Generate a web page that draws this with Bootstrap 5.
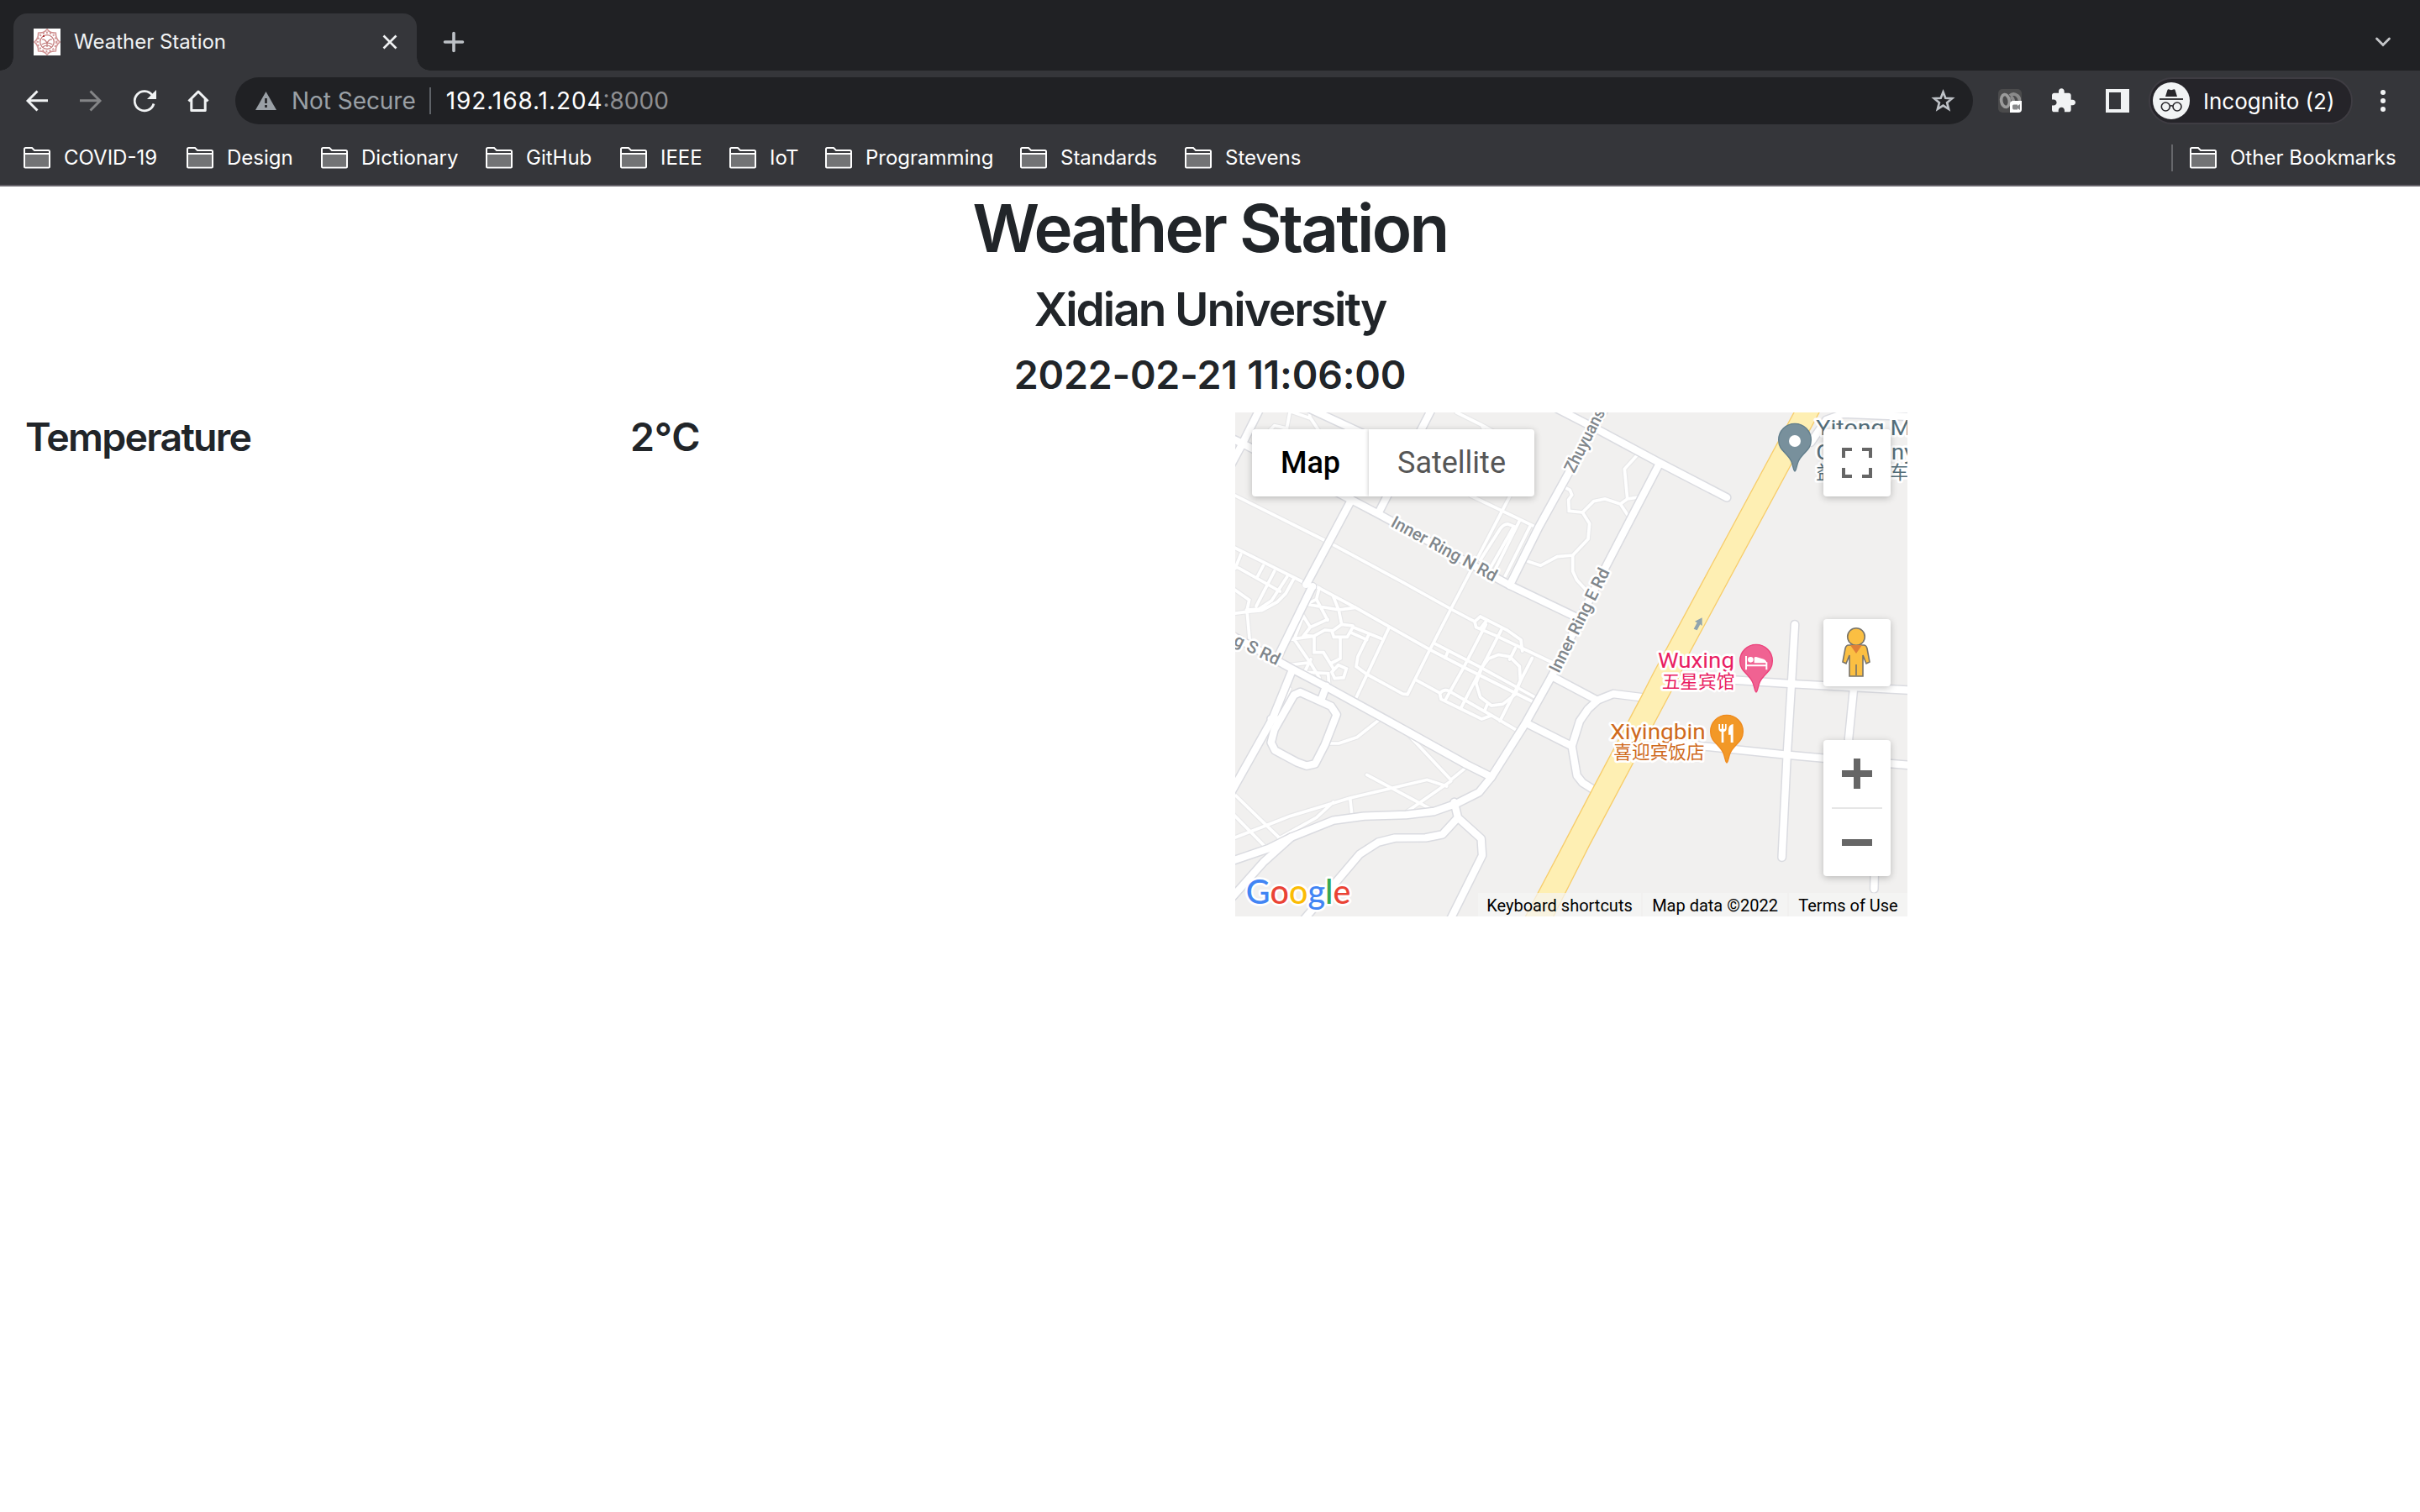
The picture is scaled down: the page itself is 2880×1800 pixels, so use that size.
<!DOCTYPE html>
<html lang="en">
<head>
<meta charset="utf-8">
<title>Weather Station</title>
<link href="https://cdn.jsdelivr.net/npm/bootstrap@5.3.0/dist/css/bootstrap.min.css" rel="stylesheet">
<style>
  body { font-family: Inter, "Noto Sans CJK SC", sans-serif; color: #212529; background: #fff; width: 2880px; height: 1800px; overflow: hidden; }
  svg { display: block; overflow: visible; flex: none; }
  .tabstrip { height: 84px; background: #202124; padding: 16px 35px 0 16px; }
  .tab-active { position: relative; width: 480px; height: 68px; background: #35363a; border-radius: 16px 16px 0 0; padding: 0 23px 0 24px; color: #f1f3f4; font-size: 24px; }
  .tab-active::before, .tab-active::after { content: ""; position: absolute; bottom: 0; width: 16px; height: 16px; }
  .tab-active::before { left: -16px; background: radial-gradient(circle at 0 0, transparent 15.5px, #35363a 16px); }
  .tab-active::after { right: -16px; background: radial-gradient(circle at 100% 0, transparent 15.5px, #35363a 16px); }
  .tab-title { margin-left: 16px; }
  .plus-btn { margin-left: 32px; }
  .toolbar-row { height: 72px; background: #35363a; padding-left: 31px; padding-right: 41px; }
  .nav-icons { gap: 38px; width: 249px; }
  .home-ico { margin-left: -1px; }
  .omnibox { width: 2068px; height: 56px; border-radius: 28px; background: #202124; padding: 0 21px 0 24px; font-size: 28px; white-space: nowrap; }
  .t-mute { color: #9aa0a6; margin-left: 18px; letter-spacing: -.05px; }
  .t-host { letter-spacing: .92px; }
  .t-port { color: #8e8f92; }
  .omni-div { width: 2px; height: 32px; background: #5f6368; margin: 0 18px 0 16px; }
  .ext-icons { gap: 36px; margin-left: 30px; }
  .incog { width: 243px; height: 56px; margin-left: 23px; border: 2px solid #3f3d43; border-radius: 28px; background: #252429; color: #fff; font-size: 26px; padding-left: 3px; white-space: nowrap; }
  .incog-name { margin-left: 16px; }
  .bookbar { height: 66px; background: #35363a; border-bottom: 2px solid #66636a; padding: 0 30px 1px 28px; color: #fff; font-size: 24px; white-space: nowrap; }
  .bm { gap: 16px; }
  .bm span { padding-top: 1px; }
  .w-covid { width: 194px; } .w-design { width: 160px; } .w-dict { width: 196px; } .w-git { width: 160px; } .w-ieee { width: 130px; }
  .w-iot { width: 114px; } .w-prog { width: 232px; } .w-std { width: 196px; } .w-other { width: 244px; }
  .bm-div { width: 2px; height: 32px; background: #66676b; margin-right: 20px; }
  .page-head { text-align: center; }
  .ttl { font-weight: 560; margin: 0 0 16px; white-space: nowrap; }
  .t1 { font-size: 78px; height: 96px; line-height: 100px; letter-spacing: -2.75px; }
  .t2 { font-size: 55px; height: 67.2px; line-height: 69px; letter-spacing: -2.05px; }
  .t3 { font-size: 46.5px; height: 57.6px; line-height: 59px; letter-spacing: -.2px; }
  .t3-name { letter-spacing: -1.75px; }
  .board > div { padding: 0 30px; }
  .map-box { position: relative; width: 800px; height: 600px; background: #f1f0ef; overflow: hidden; font-family: Roboto, "Noto Sans CJK SC", sans-serif; }
  .map-ui { position: absolute; inset: 0; padding: 20px 20px 0; }
  .map-card { background: #fff; border-radius: 4px; box-shadow: 0 2px 8px rgba(0,0,0,.24); }
  .type-map, .type-sat { height: 80px; font-size: 36px; display: flex; align-items: center; justify-content: center; }
  .type-map { width: 139px; color: #000; font-weight: 500; }
  .type-sat { width: 197px; color: #565656; box-shadow: -1px 0 4px rgba(0,0,0,.18); clip-path: inset(0 0 0 -5px); }
  .sq { width: 80px; height: 80px; }
  .pegman { margin-top: 146px; }
  .zoombox { width: 80px; height: 162px; margin-top: 64px; padding-top: 22px; }
  .zoom-line { width: 60px; height: 2px; background: #e6e6e6; margin: 22px 0 36px; }
  .legal { position: absolute; right: 0; bottom: 0; height: 28px; font-size: 20px; line-height: 30px; color: #000; gap: 2px; white-space: nowrap; }
  .legal div { background: rgba(245,245,245,.7); text-align: center; }
  .l1 { width: 194px; } .l2 { width: 172px; } .l3 { width: 141px; }
  .lbl { paint-order: stroke; stroke: #fff; stroke-width: 16; stroke-linejoin: round; }
</style>
<script src="https://cdn.jsdelivr.net/npm/bootstrap@5.3.0/dist/js/bootstrap.bundle.min.js"></script>
</head>
<body>
<svg width="0" height="0" class="position-absolute">
  <defs>
    <symbol id="folder" viewBox="0 0 32 26">
      <rect x="2" y="8" width="28" height="15" fill="#727375"/>
      <path d="M1 23.5V2.5Q1 1 2.500 1H10L13 4H29.500Q31 4 31 5.500V23.500Q31 24.500 30 24.500H2Q1 24.500 1 23.500Z M1 8H31" fill="none" stroke="#fff" stroke-width="2"/>
    </symbol>
    <path id="pin" d="M2028 243C2023 243 2022 222 2015 207C2000 175 1970 170 1970 131A58 58 0 0 1 2086 131C2086 170 2056 175 2041 207C2034 222 2033 243 2028 243Z"/>
  </defs>
</svg>

<header>
  <div class="tabstrip d-flex align-items-center">
    <div class="tab-active d-flex align-items-center">
      <svg width="32" height="32" viewBox="0 0 32 32">
        <rect width="32" height="32" fill="#fff"/>
        <g fill="none" stroke="#cf8f8f">
          <path d="M16 .8L20 4.500L26.500 5L27 11.500L31.200 16L27 20.500L26.500 27L20 27.500L16 31.200L12 27.500L5.500 27L5 20.500L.8 16L5 11.500L5.500 5L12 4.500Z" stroke-width="1.300"/>
          <circle cx="16" cy="16" r="13" stroke-width=".7"/>
          <circle cx="16" cy="16" r="11" stroke-dasharray="2 2.200" stroke-width="1.800"/>
          <circle cx="16" cy="16" r="8.300" stroke="#bf7070" stroke-width="1.200"/>
          <path d="M10 13Q13 12 16 17Q19 12 22 13M9.500 19Q16 15 22.500 19M11 22Q16 18 21 22M16 17V22" stroke="#c07878" stroke-width="1.200"/>
        </g>
        <rect x="11" y="8" width="2" height="2" fill="#b03030"/>
      </svg>
      <span class="tab-title">Weather Station</span>
      <svg class="ms-auto" width="18" height="18" viewBox="0 0 18 18"><path d="M1.500 1.500L16.500 16.500M16.500 1.500L1.500 16.500" stroke="#f1f3f4" stroke-width="2.600"/></svg>
    </div>
    <svg class="plus-btn" width="24" height="24" viewBox="0 0 24 24"><path d="M12 1.500V22.500M1.500 12H22.500" stroke="#bdc1c6" stroke-width="3.600" stroke-linecap="round"/></svg>
    <svg class="ms-auto" width="18" height="12" viewBox="0 0 18 12"><path d="M1.500 2L9 9.500L16.500 2" fill="none" stroke="#c5c7ca" stroke-width="2.800" stroke-linecap="round"/></svg>
  </div>

  <div class="toolbar-row d-flex align-items-center">
    <div class="nav-icons d-flex align-items-center flex-shrink-0">
      <svg width="26" height="26" viewBox="0 0 26 26"><path d="M13.500 1.500L2 13L13.500 24.500M2 12.800H26" fill="none" stroke="#f1f3f4" stroke-width="2.900"/></svg>
      <svg width="26" height="26" viewBox="0 0 26 26"><path d="M12.500 1.500L24 13L12.500 24.500M24 12.800H0" fill="none" stroke="#848587" stroke-width="2.900"/></svg>
      <svg width="27" height="26" viewBox="0 0 27 26"><path d="M22.300 6.500A11.600 11.600 0 1 0 24 16.500" fill="none" stroke="#f1f3f4" stroke-width="2.800"/><path d="M27 0V11H16Z" fill="#f1f3f4"/></svg>
      <svg class="home-ico" width="26" height="26" viewBox="0 0 26 26"><path d="M1.500 13.500L13 2L24.500 13.500M4.800 11V24.500H21.200V11" fill="none" stroke="#f1f3f4" stroke-width="3" stroke-linejoin="round"/></svg>
    </div>
    <div class="omnibox d-flex align-items-center flex-shrink-0">
      <svg width="25" height="22" viewBox="0 0 25 22"><path d="M12.500 0L25 22H0Z" fill="#9aa0a6"/><path d="M12.500 8V14M12.500 16V19" stroke="#202124" stroke-width="2.600"/></svg>
      <span class="t-mute">Not Secure</span>
      <div class="omni-div"></div>
      <span class="text-white t-host">192.168.1.204</span><span class="t-port">:8000</span>
      <svg class="ms-auto" width="29" height="28" viewBox="0 0 29 28"><path d="M14.500 3.500L17.300 10.700L25.200 11.200L19.100 16.200L21.100 23.900L14.500 19.600L7.900 23.900L9.900 16.200L3.800 11.200L11.700 10.700Z" fill="none" stroke="#bdc1c6" stroke-width="2.600"/></svg>
    </div>
    <div class="ext-icons d-flex align-items-center">
      <svg width="28" height="28" viewBox="0 0 28 28"><rect width="28" height="28" rx="5" fill="#4b4b4c"/><ellipse cx="8.500" cy="14" rx="4.800" ry="7.500" fill="none" stroke="#9b9b9b" stroke-width="3.600" transform="rotate(-10 8.500 14)"/><path d="M14 8Q18 4 23 8Q26 11 25 14M15 9Q18 11 18 15" fill="none" stroke="#8a8a8a" stroke-width="4"/><path d="M18 14H28V24Q28 28 24 28H14V18Q14 14 18 14Z" fill="#fff"/><path d="M18.500 18.500H23V20L26 18V25L23 23V24.500H18.500Q17 24.500 17 22V20Q17 18.500 18.500 18.500Z" fill="#88898b"/></svg>
      <svg width="28" height="28" viewBox="2 1.500 21 21"><path fill="#f1f3f4" d="M20.500 11H19V7c0-1.100-.9-2-2-2h-4V3.500C13 2.120 11.880 1 10.500 1S8 2.120 8 3.500V5H4c-1.100 0-1.990.9-1.990 2v3.800H3.500c1.490 0 2.700 1.210 2.700 2.700s-1.210 2.700-2.700 2.700H2V20c0 1.100.9 2 2 2h3.800v-1.500c0-1.490 1.210-2.700 2.700-2.700 1.490 0 2.700 1.210 2.700 2.700V22H17c1.100 0 2-.9 2-2v-4h1.500c1.380 0 2.500-1.120 2.500-2.500S21.880 11 20.500 11z"/></svg>
      <svg width="28" height="28" viewBox="0 0 28 28"><path fill-rule="evenodd" fill="#f1f3f4" d="M0 0H28V28H0ZM4 4V24H18V4Z"/></svg>
    </div>
    <div class="incog d-flex align-items-center flex-shrink-0">
      <svg width="44" height="44" viewBox="0 0 44 44"><circle cx="22" cy="22" r="22" fill="#f1f3f4"/><path d="M15 17L17.500 9Q18 8 19.500 8.500L22 9.300L24.500 8.500Q26 8 26.500 9L29 17Z" fill="#28272b"/><path d="M8 20H36" stroke="#28272b" stroke-width="1.800"/><g fill="none" stroke="#28272b" stroke-width="1.600"><circle cx="15.300" cy="29" r="5"/><circle cx="29" cy="29" r="5"/><path d="M20.300 28.300Q22 27.300 24 28.300"/></g></svg>
      <span class="incog-name">Incognito (2)</span>
    </div>
    <svg class="ms-auto" width="6" height="26" viewBox="0 0 6 26"><g fill="#f1f3f4"><circle cx="3" cy="3" r="3"/><circle cx="3" cy="13" r="3"/><circle cx="3" cy="23" r="3"/></g></svg>
  </div>

  <nav class="bookbar d-flex align-items-center">
    <div class="bm d-flex align-items-center w-covid"><svg width="32" height="26"><use href="#folder"/></svg><span>COVID-19</span></div>
    <div class="bm d-flex align-items-center w-design"><svg width="32" height="26"><use href="#folder"/></svg><span>Design</span></div>
    <div class="bm d-flex align-items-center w-dict"><svg width="32" height="26"><use href="#folder"/></svg><span>Dictionary</span></div>
    <div class="bm d-flex align-items-center w-git"><svg width="32" height="26"><use href="#folder"/></svg><span>GitHub</span></div>
    <div class="bm d-flex align-items-center w-ieee"><svg width="32" height="26"><use href="#folder"/></svg><span>IEEE</span></div>
    <div class="bm d-flex align-items-center w-iot"><svg width="32" height="26"><use href="#folder"/></svg><span>IoT</span></div>
    <div class="bm d-flex align-items-center w-prog"><svg width="32" height="26"><use href="#folder"/></svg><span>Programming</span></div>
    <div class="bm d-flex align-items-center w-std"><svg width="32" height="26"><use href="#folder"/></svg><span>Standards</span></div>
    <div class="bm d-flex align-items-center"><svg width="32" height="26"><use href="#folder"/></svg><span>Stevens</span></div>
    <div class="bm-div ms-auto"></div>
    <div class="bm d-flex align-items-center w-other"><svg width="32" height="26"><use href="#folder"/></svg><span>Other Bookmarks</span></div>
  </nav>
</header>

<main>
  <div class="page-head">
    <h1 class="ttl t1">Weather Station</h1>
    <h3 class="ttl t2">Xidian University</h3>
    <h4 class="ttl t3">2022-02-21 11:06:00</h4>
  </div>
  <div class="board row g-0">
    <div class="col-3"><h4 class="ttl t3 t3-name">Temperature</h4></div>
    <div class="col-3"><h4 class="ttl t3">2°C</h4></div>
    <div class="col-6">
      <div class="map-box">
        <svg width="800" height="600" viewBox="30 33 2400 1800">
          <defs>
            <g id="minor" fill="none">
              <path d="M20 325L360 495L620 635L800 735L885 780L890 800L960 830L1170 930"/>
              <path d="M885 780L905 762L1000 810L1050 845L1055 885M905 805L925 780"/>
              <path d="M20 512L285 645M320 655L460 730L725 880L850 945L1090 1065M745 860L900 940L1100 1050"/>
              <path d="M1010 333L800 735L715 900L645 1040L628 1038L500 968L462 940L468 905L505 830"/>
              <path d="M870 330L1115 448M820 33L910 78L960 105M910 78L920 100"/>
              <path d="M905 560L975 450Q990 430 1005 432L1025 440L940 590M1045 420L950 610M1085 435L990 625"/>
              <path d="M1075 565L1120 580L1180 548L1235 543L1290 485L1295 430L1270 390L1222 385L1220 345L1232 328L1225 310L1205 300"/>
              <path d="M1270 390L1310 350L1350 342L1405 360L1430 342L1475 335M1405 360L1435 405M1470 180L1420 235L1430 340M1235 543L1235 600L1250 632L1290 675"/>
              <path d="M50 540L30 590M20 580L45 590L190 672M130 580L108 622M170 600L105 725M20 660L80 703L72 740L82 850M240 625L210 680L180 710L125 740L70 745L20 752M215 620L160 705L115 735L70 738"/>
              <path d="M330 660L320 700L285 718L400 738L460 730M320 700L360 775M380 690L400 740L410 790M270 755L298 800L360 772M298 800L275 830L310 832L350 810L375 812L382 835L430 835L450 800L550 840M410 790L450 795M410 790L375 815M215 845L310 832M245 850L300 930L330 980M312 835L312 890L345 890L382 950M405 840L405 912L370 930M445 820L500 845M580 800L458 1060M270 765L240 845"/>
              <path d="M225 935L290 927M270 960L362 965L365 1010M300 915L280 955M375 960L398 935L427 948L417 980L385 983Z"/>
              <path d="M890 1000L905 1050L945 1080L985 1075L1030 1040L1048 990L1045 940L1010 905L970 898L935 912L910 945ZM930 1075L920 1100"/>
              <path d="M925 790L845 945L780 1060M980 810L905 955L835 1090M1030 875L1010 915M1090 910L975 1135M790 885L780 910"/>
              <path d="M675 988L760 1035L765 1057L910 1128L945 1115M762 1035Q775 1020 792 1027L945 1115L1035 1168"/>
              <path d="M545 1130L465 1193L400 1215L360 1215M225 1020L180 1110"/>
              <path d="M640 1175L800 1345L855 1300M800 1350L770 1370L645 1457M500 1327L735 1453M785 1368L715 1345L440 1410L225 1475L20 1555M440 1410L447 1475M380 1425L320 1480L185 1555M20 1390L185 1550M20 1465L140 1587"/>
              <path d="M225 33L215 85M230 30L300 55L330 100M295 33L297 50M150 100L170 80L215 90"/>
            </g>
            <g id="major" fill="none" stroke-linejoin="round">
              <path d="M118 20L58 140L10 230M10 122L58 145L445 345L540 395L1010 650L1260 770M300 22L490 110M732 20L545 385"/>
              <path d="M445 345L285 645M305 655L190 890L175 925"/>
              <path d="M10 825L235 950L350 1010L550 1120L640 1170L855 1290L945 1335M235 950L163 1127L10 1400"/>
              <path d="M1545 215L1350 590L1160 975L1065 1145L945 1335L900 1390L820 1430L740 1458L640 1470L490 1475L380 1490L230 1550L150 1590L10 1638"/>
              <path d="M1350 20L1220 250L1115 440L1010 650M1180 20L1320 92L1540 210L1785 337"/>
              <path d="M2085 140L2140 60L2200 38L2440 48"/>
              <path d="M240 1042L262 1032L372 1082L392 1112L350 1220L315 1288L285 1295L250 1282L172 1240L158 1212L170 1165ZM355 1010L335 1065M158 1128L185 1130"/>
              <path d="M230 1550L130 1640L10 1775M812 1425L825 1480L770 1540L710 1552L600 1553L540 1568L475 1610L390 1710L270 1850M825 1480L908 1555L912 1615L795 1850"/>
              <path d="M1160 975L1320 1060M1500 1053L1380 1038L1325 1060L1290 1092L1260 1135L1232 1225L1250 1330L1270 1355L1320 1387M1070 1143L1232 1225"/>
              <path d="M1560 975L1830 990L2030 1003L2440 1025M1560 1205L1700 1225L1990 1255L2130 1268L2440 1293"/>
              <path d="M2028 790L2016 1000L2000 1260L1982 1622M2238 1020L2220 1200L2230 1275M2322 1290L2311 1735"/>
            </g>
          </defs>
          <rect x="30" y="33" width="2400" height="1800" fill="#f1f0ef"/>
          <g stroke-linecap="round">
            <use href="#minor" stroke="#e7e7e8" stroke-width="18"/>
            <use href="#minor" stroke="#fff" stroke-width="11"/>
            <use href="#major" stroke="#dadbe0" stroke-width="34"/>
            <use href="#major" stroke="#fff" stroke-width="25"/>
            <circle cx="282" cy="648" r="12" fill="#fff"/><circle cx="307" cy="655" r="12" fill="#fff"/>
          </g>
          <path d="M2032 20L1525 960L1478 1052L1310 1370L1200 1580L1060 1845L1160 1845L1294 1580L1618 970L1650 895L2122 20Z" fill="#feefb3" stroke="#f7cd6b" stroke-width="4"/>
          <path d="M1667 806L1679 784L1671 779L1697 766L1697 795L1690 790L1679 811Z" fill="#90a4ae"/>
          <g fill="#80868b" font-size="61" font-weight="500">
            <text transform="translate(582 438) rotate(28.500)" textLength="420" lengthAdjust="spacingAndGlyphs" class="lbl">Inner Ring N Rd</text>
            <text transform="translate(1186 967) rotate(-63.500)" textLength="408" lengthAdjust="spacingAndGlyphs" class="lbl">Inner Ring E Rd</text>
            <text transform="translate(1240 252) rotate(-63)" textLength="246" lengthAdjust="spacingAndGlyphs" class="lbl">Zhuyuans</text>
            <text transform="translate(178 937) rotate(26)" text-anchor="end" class="lbl">ng S Rd</text>
          </g>
          <g stroke-width="4">
            <use href="#pin" fill="#78909c" stroke="#607d8b"/>
            <circle cx="2028" cy="135" r="21" fill="#fff"/>
            <use href="#pin" transform="translate(-138 789)" fill="#f06292" stroke="#ec407a"/>
            <use href="#pin" transform="translate(-243 1041)" fill="#f29827" stroke="#ef8a1d"/>
          </g>
          <path d="M1854 903V952M1854 937H1927M1927 952V925" fill="none" stroke="#fff" stroke-width="6"/>
          <path d="M1883 928V909Q1883 906 1890 906L1912 913Q1927 917 1927 928Z" fill="#fff"/><circle cx="1870" cy="916" r="10" fill="#fff"/>
          <path d="M1756 1146V1162Q1756 1172 1766 1174V1212H1774V1174Q1784 1172 1784 1162V1146H1779V1163H1773V1146H1767V1163H1761V1146ZM1808 1146Q1791 1148 1791 1168V1184H1799V1212H1808Z" fill="#fff"/>
          <g font-size="79">
            <text x="1539" y="946" class="lbl" fill="#e91e63" textLength="273" lengthAdjust="spacingAndGlyphs">Wuxing</text>
            <text x="1553" y="1018" class="lbl" fill="#e91e63" font-size="65">五星宾馆</text>
            <text x="1369" y="1199" class="lbl" fill="#cf6a1c" textLength="340" lengthAdjust="spacingAndGlyphs">Xiyingbin</text>
            <text x="1381" y="1268" class="lbl" fill="#cf6a1c" font-size="65">喜迎宾饭店</text>
            <text x="2104" y="115" class="lbl" fill="#546e7a" textLength="339" lengthAdjust="spacingAndGlyphs">Yitong M</text>
            <text x="2104" y="200" class="lbl" fill="#546e7a" textLength="354" lengthAdjust="spacingAndGlyphs">Company</text>
            <text x="2104" y="270" class="lbl" fill="#546e7a" font-size="66">益通名汽车</text>
          </g>
          <text x="68" y="1787" class="lbl" font-family="Lato" font-size="122" font-weight="500" textLength="374" lengthAdjust="spacingAndGlyphs"><tspan fill="#4285f4">G</tspan><tspan fill="#ea4335">o</tspan><tspan fill="#fbbc05">o</tspan><tspan fill="#4285f4">g</tspan><tspan fill="#34a853">l</tspan><tspan fill="#ea4335">e</tspan></text>
        </svg>
        <div class="map-ui d-flex justify-content-between align-items-start">
          <div class="map-card d-flex">
            <div class="type-map">Map</div>
            <div class="type-sat">Satellite</div>
          </div>
          <div class="d-flex flex-column">
            <div class="map-card sq d-flex align-items-center justify-content-center">
              <svg width="36" height="36" viewBox="0 0 36 36"><path d="M2 12V2H12M24 2H34V12M34 24V34H24M12 34H2V24" fill="none" stroke="#666" stroke-width="4"/></svg>
            </div>
            <div class="map-card sq pegman d-flex align-items-center justify-content-center">
              <svg width="34" height="60" viewBox="1 0 34 60"><g fill="#fbbf42" stroke="#77736a" stroke-width="1.600"><path d="M8 21H26Q29 21 30 25L33 41L29 43L25 33V58H9V33L5 43L1 41L4 25Q5 21 8 21Z"/><circle cx="17" cy="11" r="10.300"/></g><path d="M10 21H24L17 31Z" fill="#e07f37"/><path d="M17 44V57" stroke="#77736a" stroke-width="1.600"/></svg>
            </div>
            <div class="map-card zoombox d-flex flex-column align-items-center">
              <svg width="36" height="36" viewBox="0 0 36 36"><path d="M14 0H22V14H36V22H22V36H14V22H0V14H14Z" fill="#666"/></svg>
              <div class="zoom-line"></div>
              <svg width="36" height="8"><rect width="36" height="8" fill="#666"/></svg>
            </div>
          </div>
        </div>
        <div class="legal d-flex"><div class="l1">Keyboard shortcuts</div><div class="l2">Map data ©2022</div><div class="l3">Terms of Use</div></div>
      </div>
    </div>
  </div>
</main>
</body>
</html>
